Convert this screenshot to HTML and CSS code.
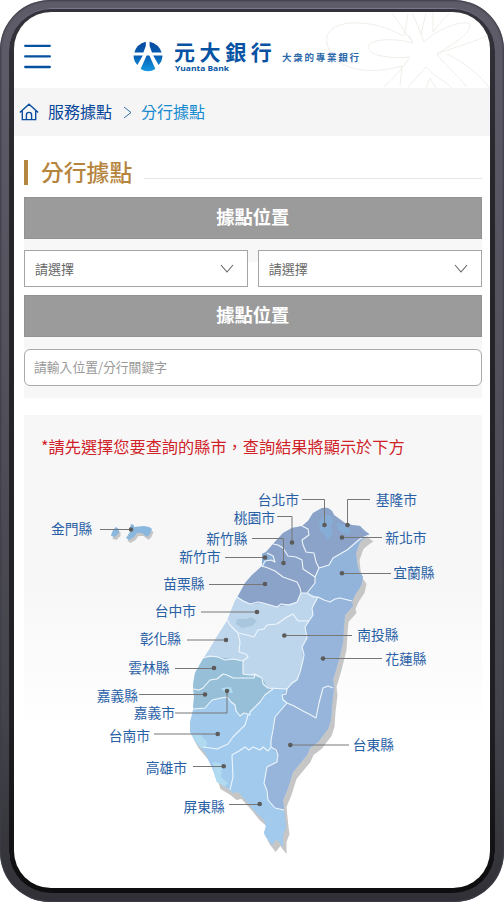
FILE: index.html
```html
<!DOCTYPE html>
<html lang="zh-Hant">
<head>
<meta charset="utf-8">
<title>元大銀行 分行據點</title>
<link rel="stylesheet" href="styles.css">
</head>
<body>
<div class="phone"><div class="bezel"><main class="screen">
  <header class="header">
    <svg class="flower" width="166" height="76" viewBox="324 12 166 76">
      <path d="M403 36C388 27 370 22 350 23C334 25 325 31 327 43C330 62 355 79 402 66M413 43C396 38 368 38 368 48C369 55 388 59 410 57M413 43L392 13M404 36L408 14M410 57C403 68 394 78 384 87M402 66L400 86M413 43L409 35M421 34Q418 25 412 13M421 34L426 13M421 34L424 42C440 26 466 20 470 24C472 34 449 46 437 54C457 46 476 42 490 34M433 12V32C437 26 443 20 449 14M447 54C463 62 480 74 490 89M437 54C442 62 457 75 467 87M426 67C434 76 446 82 452 88M426 67C420 74 414 80 408 87M426 88L430 78L436 88"/>
    </svg>
    <svg class="menu" width="27" height="26" viewBox="0 0 27 26"><path d="M1.2 1.8H25.8M1.2 12.4H25.8M1.2 23H25.8"/></svg>
    <svg class="emblem" width="30" height="31" viewBox="0 0 30 31">
      <defs><linearGradient id="lg" x2="0" y2="31" gradientUnits="userSpaceOnUse"><stop stop-color="#05479d"/><stop offset=".5" stop-color="#0761b6"/><stop offset="1" stop-color="#159be2"/></linearGradient></defs>
      <g fill="url(#lg)"><path d="M12.8.7V5L10.4 11.5H1.4Q3.6 3 12.8.7ZM16.6.7V5L19 11.5H28.6Q26 3 16.6.7ZM.6 14.6H9.8L4.4 24Q.4 20 .6 14.6ZM29.4 14.6H20.2L25.6 24Q29.6 20 29.4 14.6ZM13.6 14.6H16.4L22.4 28Q15 32.5 7.6 28Z"/></g>
    </svg>
    <div class="brand"><span class="brand-zh">元大銀行</span><svg class="brand-en" width="58" height="11"><text x="1" y="8" textLength="54" lengthAdjust="spacingAndGlyphs">Yuanta Bank</text></svg></div>
    <span class="slogan">大衆的專業銀行</span>
  </header>
  <nav class="crumbs">
    <svg width="20" height="18" viewBox="0 0 20 18"><path d="M.8 9.6L10 1.2L19.2 9.6M3.3 8V16.6H16.7V8M7.4 16.3V12Q7.4 9.4 10 9.4Q12.6 9.4 12.6 12V16.3"/></svg>
    <span class="crumb">服務據點</span>
    <svg class="sep" width="9" height="13" viewBox="0 0 9 13"><path d="M1 1L8 6.5L1 12"/></svg>
    <span class="crumb current">分行據點</span>
  </nav>
  <section class="content">
    <div class="title"><h1>分行據點</h1><i></i></div>
    <form class="search">
      <div class="bar">據點位置</div>
      <div class="selects">
        <div class="select">請選擇<svg width="14" height="9" viewBox="0 0 14 9"><path d="M1 1L7 8L13 1"/></svg></div>
        <div class="select">請選擇<svg width="14" height="9" viewBox="0 0 14 9"><path d="M1 1L7 8L13 1"/></svg></div>
      </div>
      <div class="bar">據點位置</div>
      <div class="keyword">請輸入位置/分行關鍵字</div>
    </form>
    <section class="map-panel">
      <p>*請先選擇您要查詢的縣市，查詢結果將顯示於下方</p>
      <svg class="map" width="458" height="390" viewBox="24 475 458 390">
        <defs>
          <path id="isle" d="M325 507.7L328 508L332 511L334 515L345 523L352 525L360 526L365 531L370 534.5L366 537L360 542L356 553L357 563L359 571L363 577L361 586L355 595L352 602L353 606L345 615L344 626L343 643L338 663L333 680L334 688L332 705L331 720L328 729L318 742L310 748L307 755L293 772L288 788L283 800L284 810L285 820L286 827L283 835L283 847L279 842L277 839L272 845L266 837L264 833L266 826L264 820L256 813L248 803L238 792L233 793L227 788L217 782L213 770L205 753L195 741L190 732L190 722L193 710L194 697L193 685L195 673L203 659L209 650L218 635L227 621L235 601L238 596L245 583L252 575L262 566V554L266 552L273 544L283 533L292 528L302 526L308 521L313 513L322 508Z"/>
          <path id="kin" d="M131 524L134 525V527L144 526L149 527L152 529L150 534L147 537L142 533L137 533L134 537L129 540L126 538L130 532L130 528ZM116 527Q112 530 111 536L115 537L119 533V529Z"/>
          <clipPath id="clip"><use href="#isle"/></clipPath>
        </defs>
        <use class="shadow" href="#kin" x="1.5" y="3"/><use class="kinmen" href="#kin"/>
        <use class="shadow" href="#isle" x="3.5" y="7"/>
        <g clip-path="url(#clip)">
          <path class="south" d="M180 490H390V860H180Z"/>
          <path class="north" d="M180 490H390V535H370L360 539L347 550L333 558L329 565L319 568L315 577V583L307 593H301L297 602L277 607L263 603L250 604L237 597H180Z"/>
          <path class="yilan" d="M390 535H370L360 539L347 550L333 558L329 565L319 568L315 577V583L307 593L313 597H318L330 602L340 598L352 601H390Z"/>
          <path class="central" d="M180 597H237L250 604L263 603L277 607L297 602L301 593H307L318 597L312 608L313 615L309 621L305 627L307 638L302 647L303 660L297 680L287 689H268L262 678L243 674V661L218 657L180 658Z"/>
          <path class="west" d="M180 658L218 657L243 661V674L262 678L268 688L273 689L260 702L250 712L240 716L235 705L227 697L212 700L205 708L180 709Z"/>
          <path class="east" d="M318 597L330 602L340 598L352 601H390V830H284V810L275 808L268 800L264 783L267 767L277 762L278 755L271 747V740L275 717L287 703L282 695L287 689L297 680L303 660L302 647L307 638L305 627L309 621L313 615L312 608Z"/>
          <path class="south" d="M264 810L284 810L290 812V855H260Z"/>
          <path class="accent" d="M319 522L324 516L330 515L333 520L331 526L333 534L327 540L324 534L320 531ZM336 523L345 525L351 530L348 535L339 531ZM261 555L269 553L275 560L268 559L264 567H260Z"/>
          <path class="city" d="M237 619L246 619L252 617L257 621L252 626L242 628L236 624Z"/>
          <path class="coast" d="M190 733L201 735L207 742L206 748H196ZM213 762L220 763L222 769L221 777L228 783L225 787L214 784ZM221 688L231 687L233 693L225 693Z"/>
        </g>
        <g class="borders">
          <path d="M302 526L308 529L309 535L302 540L303 545L306 552L314 553L316 562L319 568L315 577M370 534.5L360 539L347 550L333 558L329 565L319 568M273 544L278 545L283 548L288 556L296 557L302 560L303 569L309 573L315 577V583L307 593L313 597H318L324 600L330 602L335 599L340 598L352 601M262 566L268 568L275 571L283 577L297 582L300 588L301 593H307M237 597L243 601L250 604L258 602L263 603L270 605L277 607L281 604L290 605L297 602L301 593M318 597L312 608L313 615L309 621M262 567L265 561L271 560L275 562L273 556L267 553"/>
          <path d="M309 621H298L293 614L287 617L277 624L267 625L264 629L258 630L254 637L247 635L238 633L230 625L227 620M238 633L240 642L239 652L246 654L248 657L243 661M203 658L210 656L218 657L225 660L233 659L243 661V674L250 675L255 674L262 678L263 684L268 688L287 689M309 621L305 627L307 638L302 647L304 655L303 660L300 672L297 680L292 683L287 689M193 689L199 690L203 688L210 680L217 679L223 674L227 675L233 678L254 678L255 674"/>
          <path d="M193 709L205 708L212 700L221 698L227 697L231 702L235 705L236 711L240 716L244 713L250 715L250 712L260 702L265 695L273 689M248 715L245 725L233 737L228 744L217 749L203 747M287 689L286 694L282 695L283 700L287 703L275 717L273 730L271 740V747L268 751L263 747L260 750L253 747L249 750L245 747L239 751L232 755L233 777L230 790M271 747L276 750L278 755L277 762L267 767L264 783L267 791L268 800L275 808L284 810M287 703L294 706L303 711L309 714L316 718L319 703L323 688L328 686L333 688"/>
        </g>
        <g class="leaders">
          <path d="M302 499.5H324.5V525M277 516.5H292V542.5M252 538.5H283.5V563M225 557.5H265M209 584.5H265M201 612H257M187 640H226M175 668.5H214M139 694.5H205M175 713H227V691M154 734H218M193 766.5H224M229 804.5H260M349 745H290M382 658.5H323M352 635.5H284M391 573.5H342M382 537.5H342M370 499.5H347.5V525M100 529.5H131"/>
        </g>
        <g class="dots"><circle cx="324.5" cy="525" r="2.3"/><circle cx="292" cy="542.5" r="2.3"/><circle cx="283.5" cy="563" r="2.3"/><circle cx="265" cy="557.5" r="2.3"/><circle cx="265" cy="584" r="2.3"/><circle cx="257" cy="612" r="2.3"/><circle cx="226" cy="640" r="2.3"/><circle cx="214" cy="668" r="2.3"/><circle cx="205" cy="694.5" r="2.3"/><circle cx="227" cy="691" r="2.3"/><circle cx="217.7" cy="734" r="2.3"/><circle cx="223.7" cy="766.3" r="2.3"/><circle cx="259.7" cy="804" r="2.3"/><circle cx="290.3" cy="745" r="2.3"/><circle cx="323" cy="658.5" r="2.3"/><circle cx="284.3" cy="635.5" r="2.3"/><circle cx="342" cy="573.3" r="2.3"/><circle cx="342" cy="537.5" r="2.3"/><circle cx="347.5" cy="525" r="2.3"/><circle cx="131" cy="529.5" r="2.3"/></g>
        <g class="labels">
          <text x="258" y="505">台北市</text><text x="234" y="523">桃園市</text><text x="206.5" y="544">新竹縣</text><text x="179.5" y="562.5">新竹市</text><text x="163.5" y="589">苗栗縣</text><text x="155" y="616.5">台中市</text><text x="140" y="644.5">彰化縣</text><text x="128.5" y="673.5">雲林縣</text><text x="97" y="701">嘉義縣</text><text x="134" y="718.5">嘉義市</text><text x="109" y="741.5">台南市</text><text x="146" y="773">高雄市</text><text x="183.7" y="812.3">屏東縣</text><text x="353" y="750">台東縣</text><text x="385.5" y="664.5">花蓮縣</text><text x="357.5" y="640.7">南投縣</text><text x="393.5" y="578.5">宜蘭縣</text><text x="385.5" y="543.3">新北市</text><text x="376" y="505.5">基隆市</text><text x="51.3" y="534.7">金門縣</text>
        </g>
      </svg>
    </section>
  </section>
</main></div></div>
</body>
</html>
```
FILE: styles.css
```css
* { box-sizing: border-box; }
body { margin: 0; background: #fff; font-family: "Noto Sans CJK TC", sans-serif; }
.phone {
  width: 504px; height: 902px; padding: 8px 9px 9px; border-radius: 50px;
  background: linear-gradient(#5d5c68, #52515c 40%, #43434b 80%, #303036);
  box-shadow: inset 0 0 2px 1px #3d3c48;
}
.bezel {
  height: 100%; padding: 4px 5px 5px; border-radius: 42px;
  background: linear-gradient(#34333b, #26262b 20%, #202024 80%, #0e0d0f);
  box-shadow: inset 0 1px 0 #77768a;
}
.screen { height: 100%; overflow: hidden; border-radius: 37px; background: #fff; }
.header { position: relative; height: 76px; display: flex; align-items: flex-start; padding-left: 10px; }
.flower { position: absolute; right: 0; top: 0; fill: none; stroke: #efeee8; stroke-width: 1; }
.menu { margin-top: 32px; fill: none; stroke: #05509f; stroke-width: 2.3; stroke-linecap: round; }
.emblem { margin: 29px 0 0 82px; }
.brand { position: relative; width: 108px; margin-left: 11px; padding-top: 27px; display: flex; flex-direction: column; }
.brand-zh { height: 24px; font-size: 21px; line-height: 25px; font-weight: 700; letter-spacing: 4.6px; color: #0753a3; white-space: nowrap; }
.brand-en { display: block; fill: #0753a3; font: 700 7.2px "Open Sans", sans-serif; }
.slogan { position: relative; margin-top: 38px; font-size: 9.5px; line-height: 14px; font-weight: 700; letter-spacing: 1.75px; color: #2c69aa; white-space: nowrap; }
.crumbs { height: 48px; display: flex; align-items: center; padding-left: 5px; background: #f5f5f5; color: #07479a; font-size: 16px; }
.crumbs svg { fill: none; stroke: #0b4e9f; stroke-width: 1.4; }
.crumb { margin-left: 9px; line-height: 24px; position: relative; top: -1px; }
.crumbs .sep { margin-left: 11px; stroke: #3670ad; stroke-width: 1; }
.crumb.current { color: #168bd0; }
.content { padding: 24px 8.5px 0 10px; }
.title { height: 25px; display: flex; align-items: center; border-left: 4.5px solid #b3873f; }
h1 { margin: -3px 12px 0 13px; font-size: 22.8px; line-height: 25px; font-weight: 500; color: #b5853e; white-space: nowrap; }
.title i { flex: 1; height: 1px; margin-top: 12px; background: #e5e5e5; }
.search { height: 201px; margin-top: 12px; background: linear-gradient(#f7f7f7 65px, #fff 65px, #fff 140px, #f7f7f7 140px); }
.bar { height: 41.5px; border: 1px solid #929292; background: #9b9b9b; color: #fff; font-size: 18.3px; line-height: 37px; font-weight: 700; text-align: center; }
.selects { display: grid; grid-template-columns: 1fr 1fr; gap: 10px; padding: 11.5px 0 8px; }
.select { height: 37px; display: flex; align-items: center; justify-content: space-between; padding: 0 13px 0 10px; border: 1px solid #a5a5a5; background: #fff; font-size: 13px; line-height: 34px; color: #686868; }
.select svg { fill: none; stroke: #636363; stroke-width: 1.1; }
.keyword { height: 37px; margin-top: 12px; padding-left: 9px; line-height: 34px; border: 1px solid #aaa; border-radius: 6px; background: #fff; color: #999; font-size: 12.8px; }
.map-panel { height: 450px; margin-top: 17px; padding-top: 18px; background: linear-gradient(#f7f7f7 170px, #fff 315px); }
.map-panel p { margin: 0 0 0 17px; font-size: 16.2px; line-height: 26px; color: #cf2229; white-space: nowrap; }
.map { display: block; margin-top: 16px; }
.shadow { fill: #c6c6c6; }
.kinmen { fill: #89b7de; }
.north { fill: #8ba3c8; }
.yilan { fill: #92b4da; }
.central { fill: #bed6ec; }
.west { fill: #97c0d8; }
.east { fill: #97b5da; }
.south { fill: #a1caed; }
.accent { fill: #85add6; }
.city { fill: #a9c6df; }
.coast { fill: #b0daf0; }
.borders { fill: none; stroke: #eef6fc; stroke-width: 1.1; stroke-linejoin: round; }
.leaders { fill: none; stroke: #777; stroke-width: 1; }
.dots { fill: #5b5b5b; }
.labels { font-size: 13.8px; fill: #2860a6; transform: translate(-.3px, -.5px); }
```
